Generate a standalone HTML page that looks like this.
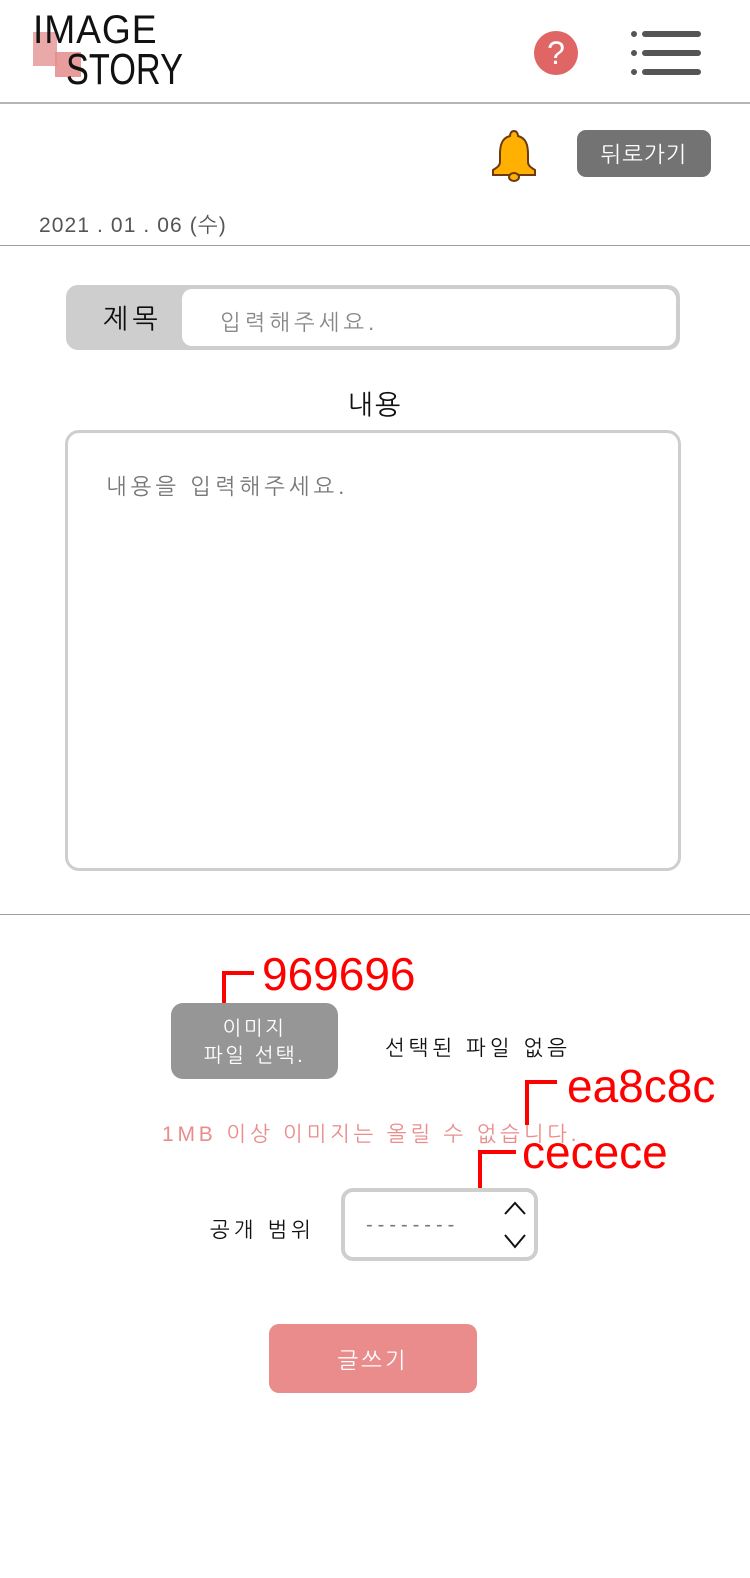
<!DOCTYPE html>
<html><head><meta charset="utf-8"><style>
*{margin:0;padding:0;box-sizing:border-box}
body{width:750px;height:1578px;background:#fff;position:relative;font-family:"Liberation Sans","NanumGothic","Noto Sans CJK KR",sans-serif;overflow:hidden}
.a{position:absolute;white-space:nowrap}
.hr{position:absolute;left:0;width:750px;height:1px;background:#9e9e9e}
</style></head><body>
<!-- logo -->
<div class="a" style="left:33px;top:32px;width:24px;height:34px;background:#e8a0a0;opacity:.9"></div>
<div class="a" style="left:55px;top:52px;width:26px;height:25px;background:#e58b8b;opacity:.85"></div>
<div class="a" style="left:33px;top:8px;font-size:40px;letter-spacing:1px;color:#111;transform:scaleX(.93);transform-origin:left;line-height:44px">IMAGE</div>
<div class="a" style="left:66px;top:46px;font-size:44px;letter-spacing:0px;color:#111;transform:scaleX(.78);transform-origin:left;line-height:48px">STORY</div>
<!-- help -->
<div class="a" style="left:534px;top:31px;width:44px;height:44px;border-radius:50%;background:#e06565;color:#fff;font-size:32px;text-align:center;line-height:44px">?</div>
<!-- menu -->
<svg class="a" style="left:628px;top:28px" width="76" height="50">
<g fill="#555"><circle cx="6" cy="6" r="3"/><circle cx="6" cy="25" r="3"/><circle cx="6" cy="44" r="3"/></g>
<g stroke="#555" stroke-width="6" stroke-linecap="round"><line x1="17" y1="6" x2="70" y2="6"/><line x1="17" y1="25" x2="70" y2="25"/><line x1="17" y1="44" x2="70" y2="44"/></g></svg>
<div class="hr" style="top:102px;height:2px;background:#b5b5b5"></div>
<!-- bell -->
<svg class="a" style="left:489px;top:128px" width="50" height="54">
<path d="M25 3 C22 3 21 6 21 8 C13 10 11 17 11 26 L11 34 C11 38 7 40 4 42 L4 47 L46 47 L46 42 C43 40 39 38 39 34 L39 26 C39 17 37 10 29 8 C29 6 28 3 25 3Z" fill="#ffb000" stroke="#6b3a10" stroke-width="2"/>
<ellipse cx="25" cy="49" rx="5" ry="4" fill="#ffb000" stroke="#6b3a10" stroke-width="2"/></svg>
<div class="a" style="left:577px;top:130px;width:134px;height:47px;border-radius:9px;background:#737373;color:#fff;font-size:22px;text-align:center;line-height:49px;letter-spacing:1px">뒤로가기</div>
<div class="a" style="left:39px;top:213px;font-size:21px;color:#555;letter-spacing:1.1px">2021 . 01 . 06 (수)</div>
<div class="hr" style="top:245px"></div>
<!-- title -->
<div class="a" style="left:66px;top:285px;width:614px;height:65px;border-radius:12px;background:#cecece"></div>
<div class="a" style="left:103px;top:302px;font-size:27px;color:#111;letter-spacing:4px">제목</div>
<div class="a" style="left:182px;top:289px;width:494px;height:57px;border-radius:10px;background:#fff"></div>
<div class="a" style="left:220px;top:309px;font-size:22px;color:#888;letter-spacing:4px">입력해주세요.</div>
<div class="a" style="left:0;width:750px;top:388px;text-align:center;font-size:27px;color:#111;letter-spacing:2px">내용</div>
<div class="a" style="left:65px;top:430px;width:616px;height:441px;border:3px solid #cecece;border-radius:14px"></div>
<div class="a" style="left:106px;top:473px;font-size:22px;color:#777;letter-spacing:4px">내용을 입력해주세요.</div>
<div class="hr" style="top:914px"></div>
<!-- annotations -->
<div class="a" style="left:222px;top:971px;width:4px;height:44px;background:#f00"></div>
<div class="a" style="left:222px;top:971px;width:32px;height:4px;background:#f00"></div>
<div class="a" style="left:262px;top:946px;font-size:46px;color:#f00;line-height:56px">969696</div>
<div class="a" style="left:171px;top:1003px;width:167px;height:76px;border-radius:12px;background:#969696;color:#fff;font-size:20px;text-align:center;line-height:27px;padding-top:13px;letter-spacing:2.5px;white-space:normal">이미지<br>파일 선택.</div>
<div class="a" style="left:385px;top:1036px;font-size:21px;color:#111;letter-spacing:4px">선택된 파일 없음</div>
<div class="a" style="left:162px;top:1122px;font-size:21px;color:#ea8c8c;letter-spacing:3.8px">1MB 이상 이미지는 올릴 수 없습니다.</div>
<div class="a" style="left:525px;top:1080px;width:4px;height:45px;background:#f00"></div>
<div class="a" style="left:525px;top:1080px;width:32px;height:4px;background:#f00"></div>
<div class="a" style="left:567px;top:1058px;font-size:46px;color:#f00;line-height:56px">ea8c8c</div>
<div class="a" style="left:478px;top:1150px;width:4px;height:42px;background:#f00"></div>
<div class="a" style="left:478px;top:1150px;width:38px;height:4px;background:#f00"></div>
<div class="a" style="left:522px;top:1124px;font-size:46px;color:#f00;line-height:56px">cecece</div>
<!-- select -->
<div class="a" style="left:210px;top:1218px;font-size:21px;color:#111;letter-spacing:4px">공개 범위</div>
<div class="a" style="left:341px;top:1188px;width:197px;height:73px;border:4px solid #cecece;border-radius:12px;background:#fff"></div>
<div class="a" style="left:366px;top:1214px;font-size:20px;color:#777;letter-spacing:5px">--------</div>
<svg class="a" style="left:502px;top:1197px" width="28" height="56" fill="none" stroke="#111" stroke-width="2"><polyline points="3,17 13,6 23,17"/><polyline points="3,38 13,50 23,38"/></svg>
<div class="a" style="left:269px;top:1324px;width:208px;height:69px;border-radius:10px;background:#ea8c8c;color:#fff;font-size:22px;text-align:center;line-height:73px;letter-spacing:3px">글쓰기</div>
</body></html>
